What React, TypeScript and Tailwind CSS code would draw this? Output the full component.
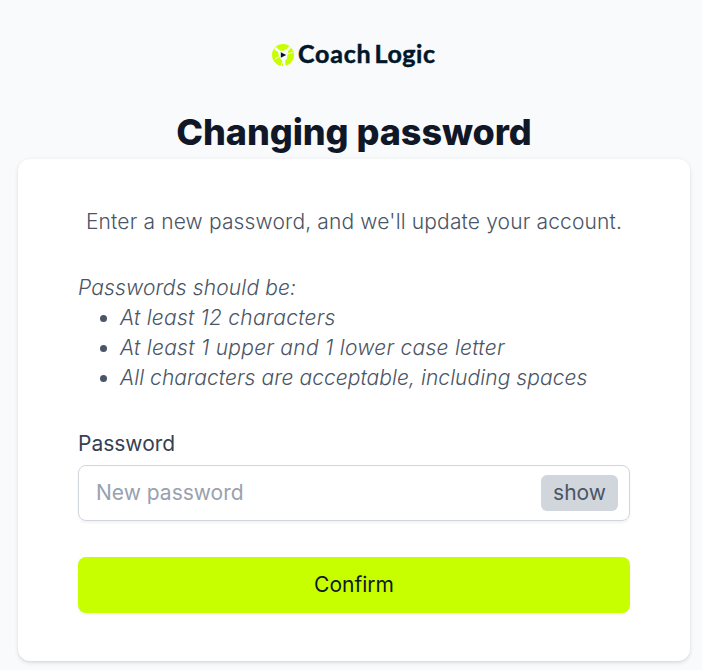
import { useState } from 'react';

const rules = [
  { text: 'At least 12 characters', tracking: 'tracking-[0.23px]' },
  { text: 'At least 1 upper and 1 lower case letter', tracking: 'tracking-[0.27px]' },
  { text: 'All characters are acceptable, including spaces', tracking: 'tracking-[0.06px]' },
];

function Logo() {
  return (
    <div className="flex h-[30px] items-center pl-[253px] text-[#00172b]">
      <svg viewBox="0 0 24 24" className="h-6 w-6 shrink-0" aria-hidden="true">
        <circle cx="12" cy="12" r="11" fill="#c8ff00" />
        {/* three forked arms around the play button */}
        <path
          d="M7.8 12.5 7 9 3 6.2l1.8-2.4 4 3.8 3.4.3 3.9-2.4 2.8-3.1 1.7 1.9-3.4 3.7-.8 4.2-.6 3.5-1.8 2.4.6 5.1-2.4.2-.4-4.9-2.3-2.7z"
          fill="#f9fafb"
        />
        <path d="M16 11 21.8 9.5M8.5 13.5 4 16M11.8 18l-1.8 5" fill="none" stroke="#f9fafb" strokeWidth="1" />
        <path d="M9.8 9.2 15.2 12 9.8 14.8z" fill="#00172b" />
      </svg>
      <div className="-mt-1 ml-[3px] flex gap-[3px] font-[Lato,sans-serif] text-[25px] font-bold leading-[30px] [-webkit-text-stroke:0.5px_#00172b]">
        <span className="tracking-[0.8px]">Coach</span>
        <span className="tracking-[0.6px]">Logic</span>
      </div>
    </div>
  );
}

export default function App() {
  const [visible, setVisible] = useState(false);

  return (
    <main className="h-[670px] overflow-hidden bg-gray-50 px-[18px] pt-10 font-[Inter,sans-serif] text-[21px] text-gray-600">
      <Logo />
      <h1 className="mt-10 w-[672px] text-center text-4xl font-extrabold leading-[45px] tracking-[-0.05px] text-gray-900">
        Changing password
      </h1>
      <section className="mt-1 h-[502px] w-[672px] rounded-xl bg-white px-[60px] pt-12 shadow-[0_1.5px_4.5px_rgba(0,0,0,0.1),0_1.5px_3px_-1.5px_rgba(0,0,0,0.1)]">
        <p className="text-center font-light leading-[30px] tracking-[0.15px]">
          Enter a new password, and we'll update your account.
        </p>
        <div className="mt-9 font-light italic leading-[30px]">
          <p className="tracking-[0.15px]">Passwords should be:</p>
          <ul className="list-disc pl-[42px]">
            {rules.map((rule) => (
              <li key={rule.text} className={rule.tracking}>{rule.text}</li>
            ))}
          </ul>
        </div>
        <form className="mt-9" onSubmit={(e) => e.preventDefault()}>
          <label htmlFor="password" className="block leading-[30px] text-gray-700">Password</label>
          <div className="mt-1.5 flex h-14 items-center rounded-lg border border-gray-300 pl-[17px] pr-[11px] shadow-[0_1.5px_3px_rgba(0,0,0,0.05)]">
            <input
              id="password"
              type={visible ? 'text' : 'password'}
              placeholder="New password"
              className="min-w-0 flex-1 outline-none placeholder:text-gray-400"
            />
            <button type="button" onClick={() => setVisible(!visible)} className="h-9 w-[77px] rounded-md bg-gray-300">
              {visible ? 'hide' : 'show'}
            </button>
          </div>
          <button
            type="submit"
            className="mt-9 h-14 w-full rounded-lg bg-[#c8ff00] text-gray-900 shadow-[0_1.5px_3px_rgba(0,0,0,0.05)]"
          >
            Confirm
          </button>
        </form>
      </section>
    </main>
  );
}
